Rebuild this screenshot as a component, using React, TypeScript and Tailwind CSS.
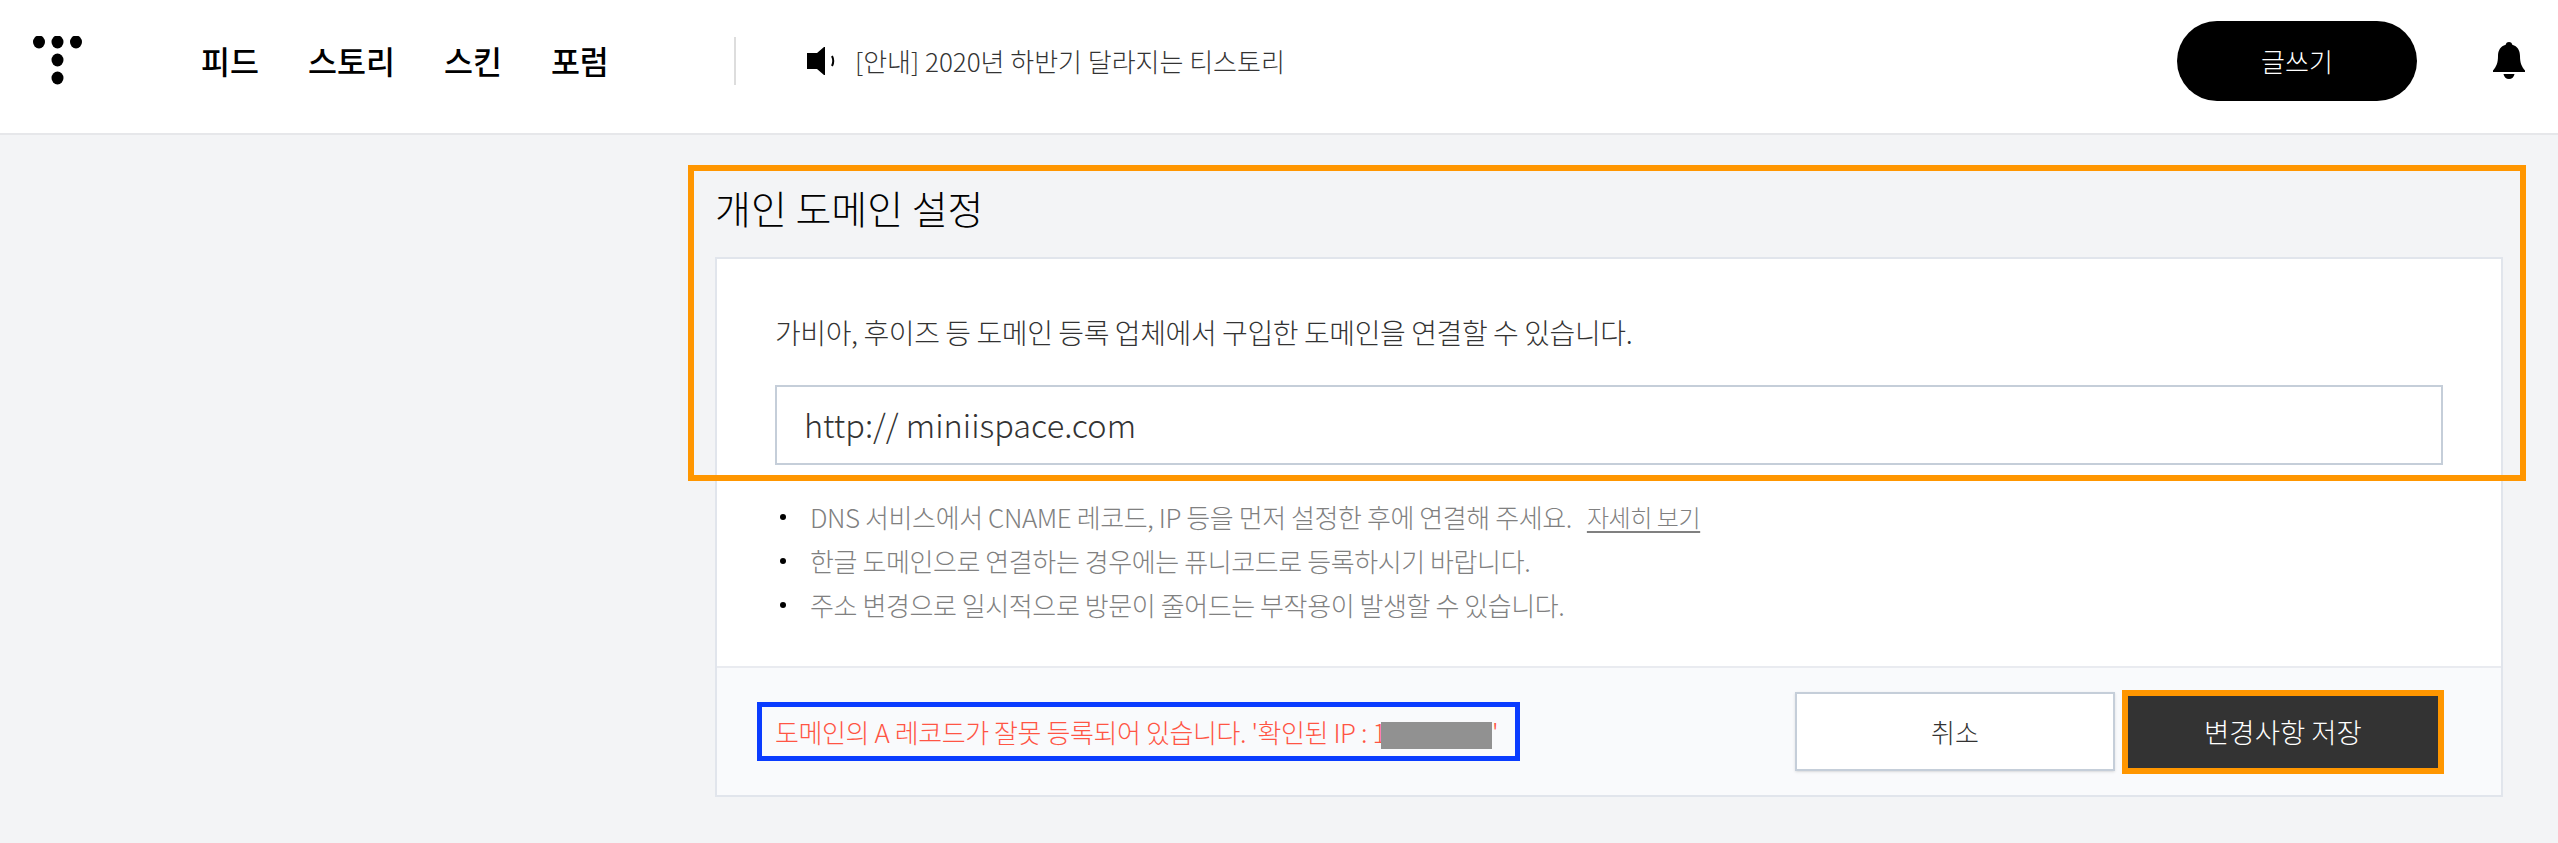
const FONT = "font-['Noto_Sans_CJK_KR','Noto_Sans',sans-serif]";

function Logo() {
  return (
    <svg width="50" height="50" viewBox="0 0 50 50" fill="#000" className="block">
      <ellipse cx="6" cy="6" rx="6" ry="6.5" />
      <ellipse cx="24.5" cy="6" rx="6" ry="6.5" />
      <ellipse cx="43" cy="6" rx="6" ry="6.5" />
      <ellipse cx="24.5" cy="24" rx="6" ry="6.5" />
      <ellipse cx="24.5" cy="42" rx="6" ry="6.5" />
    </svg>
  );
}

function Speaker() {
  return (
    <svg width="28" height="28" viewBox="0 0 28 28" className="block">
      <path d="M0 6h10L17 0h1v28h-1L10 22H0z" fill="#000" />
      <path d="M25 9c1.500 3 1.500 7 0 10" fill="none" stroke="#000" strokeWidth="2" />
    </svg>
  );
}

function Bell() {
  return (
    <svg width="32" height="37" viewBox="0 0 32 37" className="block" fill="#000">
      <path d="M16 0c2 0 3 1.300 3.300 2.800C24.500 4.300 27 8.500 27 14c0 6.500 1.500 10.500 5 14.500V30H0v-1.500C3.500 24.500 5 20.500 5 14 5 8.500 7.500 4.300 12.700 2.800 13 1.300 14 0 16 0z" />
      <path d="M10.500 32h11c-.5 3-2.700 5-5.500 5s-5-2-5.500-5z" />
    </svg>
  );
}

const NAV = ["피드", "스토리", "스킨", "포럼"];

const NOTES = [
  "DNS 서비스에서 CNAME 레코드, IP 등을 먼저 설정한 후에 연결해 주세요.",
  "한글 도메인으로 연결하는 경우에는 퓨니코드로 등록하시기 바랍니다.",
  "주소 변경으로 일시적으로 방문이 줄어드는 부작용이 발생할 수 있습니다.",
];

export default function App() {
  return (
    <div className={`relative min-h-[843px] bg-[#f3f4f6] ${FONT}`}>
      {/* header */}
      <header className="flex h-[135px] items-center border-b-2 border-[#e6e7ea] bg-white pl-[33px] pr-[33px] pb-[12px]">
        <div className="w-[168px]">
          <Logo />
        </div>
        <nav className="flex w-[533px] gap-[49px] text-[31.5px] font-medium text-black">
          {NAV.map((n) => (
            <a key={n} href="#">
              {n}
            </a>
          ))}
        </nav>
        <div className="h-[48px] w-[2px] bg-[#dddddd]" />
        <div className="ml-[71px] flex items-center gap-[20px] text-[26px] font-light text-[#333333]">
          <Speaker />
          <span>[안내] 2020년 하반기 달라지는 티스토리</span>
        </div>
        <button className="ml-auto h-[80px] w-[240px] rounded-full bg-black text-[26px] font-light text-white">
          글쓰기
        </button>
        <div className="ml-[76px]">
          <Bell />
        </div>
      </header>

      {/* content */}
      <main className="pl-[715px] pr-[55px]">
        <h1 className="h-[122px] pt-[44px] text-[39px] leading-[56px] font-light text-black">
          개인 도메인 설정
        </h1>

        <section className="border-2 border-[#e1e5ec] bg-white">
          <div className="px-[58px] pt-[53px] pb-[39px]">
            <p className="text-[28px] leading-[40px] font-light tracking-[-0.4px] text-[#333333]">
              가비아, 후이즈 등 도메인 등록 업체에서 구입한 도메인을 연결할 수 있습니다.
            </p>
            <div className="mt-[33px] flex h-[80px] items-center border-2 border-[#c5ced9] pb-[2px] pl-[27px] text-[32.5px] font-light text-[#333333]">
              http:// miniispace.com
            </div>
            <ul className="mt-[30px] text-[26px] leading-[44px] font-light tracking-[-0.4px] text-[#808080]">
              {NOTES.map((note, i) => (
                <li key={i} className="flex items-center">
                  <span className="ml-[5px] mr-[24px] h-[6px] w-[6px] rounded-full bg-black" />
                  <span>{note}</span>
                  {i === 0 && (
                    <a href="#" className="ml-[15px] text-[24px] underline underline-offset-4">
                      자세히 보기
                    </a>
                  )}
                </li>
              ))}
            </ul>
          </div>

          <div className="flex h-[129px] items-center justify-between border-t-2 border-[#e9ebf0] bg-[#f9fafc] pl-[58px] pr-[57px]">
            <p className="relative text-[26px] font-light tracking-[-0.4px] text-[#ff5544]">
              도메인의 A 레코드가 잘못 등록되어 있습니다. '확인된 IP : 1
              <span className="-ml-[5px] inline-block h-[27px] w-[111px] bg-[#919191] align-middle" />'
              <span className="absolute -left-[18px] -right-[22px] -inset-y-[10px] border-[5px] border-[#0a3cff]" />
            </p>
            <div className="flex items-center gap-[7px]">
              <button className="h-[79px] w-[320px] border-2 border-[#c5ced9] bg-white text-[26px] font-light text-[#333333] shadow-sm">
                취소
              </button>
              <button className="h-[84px] w-[322px] border-[6px] border-[#ff9600] bg-[#333333] text-[27.5px] font-light text-white">
                변경사항 저장
              </button>
            </div>
          </div>
        </section>
      </main>

      {/* annotation box drawn over the heading and input */}
      <div className="pointer-events-none absolute left-[688px] top-[165px] h-[316px] w-[1838px] border-[6px] border-[#ff9600]" />
    </div>
  );
}
